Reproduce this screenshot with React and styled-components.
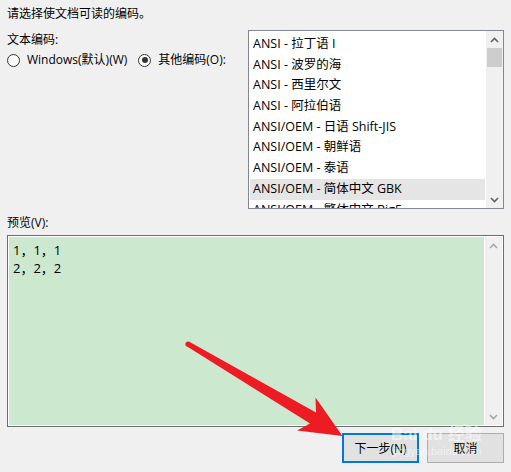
import React from "react";
import styled, { createGlobalStyle } from "styled-components";

const GlobalStyle = createGlobalStyle`
  html, body {
    margin: 0;
    padding: 0;
    background: #f0f0f0;
  }
  body {
    font-family: "Open Sans", "Noto Sans CJK SC", sans-serif;
    font-size: 12px;
    color: #000;
  }
`;

const encodings = [
  "ANSI - 拉丁语 I",
  "ANSI - 波罗的海",
  "ANSI - 西里尔文",
  "ANSI - 阿拉伯语",
  "ANSI/OEM - 日语 Shift-JIS",
  "ANSI/OEM - 朝鲜语",
  "ANSI/OEM - 泰语",
  "ANSI/OEM - 简体中文 GBK",
  "ANSI/OEM - 繁体中文 Big5",
];

const Chevron = ({ up, color }) => (
  <svg width="9" height="6" viewBox="0 0 9 6">
    <path
      d={up ? "M1 5 L4.5 1.5 L8 5" : "M1 1 L4.5 4.5 L8 1"}
      fill="none"
      stroke={color}
      strokeWidth="1.6"
    />
  </svg>
);

const App = () => {
  return (
    <Page>
      <GlobalStyle />
      <Heading>请选择使文档可读的编码。</Heading>

      <TopRow>
        <LeftCol>
          <Label>文本编码:</Label>
          <RadioRow>
            <Radio>
              <Circle />
              Windows(默认)(W)
            </Radio>
            <Radio>
              <Circle checked />
              其他编码(O):
            </Radio>
          </RadioRow>
        </LeftCol>

        <ListBox>
          <Items>
            {encodings.map((e, i) => (
              <Item key={e} selected={i === 7}>
                {e}
              </Item>
            ))}
          </Items>
          <ScrollBar>
            <Arrow>
              <Chevron up color="#606060" />
            </Arrow>
            <Thumb />
            <Track />
            <Arrow>
              <Chevron color="#606060" />
            </Arrow>
          </ScrollBar>
        </ListBox>
      </TopRow>

      <PreviewLabel>预览(V):</PreviewLabel>
      <Preview>
        <PreviewText>
          <div>1，1，1</div>
          <div>2，2，2</div>
        </PreviewText>
        <ScrollBar light>
          <Arrow>
            <Chevron up color="#a8a8a8" />
          </Arrow>
          <Track />
          <Arrow>
            <Chevron color="#a8a8a8" />
          </Arrow>
        </ScrollBar>
      </Preview>

      <Buttons>
        <Button primary>下一步(N)</Button>
        <Button>取消</Button>
      </Buttons>

      <Watermark>
        <span>Bai du 经验</span>
        <small>jingyan.baidu.com</small>
      </Watermark>

      <ArrowOverlay width="511" height="472" viewBox="0 0 511 472">
        <circle cx="188" cy="344" r="2.6" fill="#ed1c24" />
        <polygon
          fill="#ed1c24"
          points="189.3,341.8 316,412.5 315.5,397.5 342.5,436 297,430.5 310,423.5 186.7,346.2"
        />
      </ArrowOverlay>
    </Page>
  );
};

const Page = styled.div`
  position: relative;
  width: 511px;
  height: 472px;
  box-sizing: border-box;
  padding: 5px 7px 0 7px;
  overflow: hidden;
`;

const Heading = styled.div`
  line-height: 18px;
`;

const TopRow = styled.div`
  display: flex;
  justify-content: space-between;
  margin-top: 7px;
`;

const LeftCol = styled.div`
  display: flex;
  flex-direction: column;
  padding-top: 1px;
`;

const Label = styled.div`
  line-height: 18px;
`;

const RadioRow = styled.div`
  display: flex;
  gap: 11px;
  margin-top: 2px;
`;

const Radio = styled.label`
  display: flex;
  align-items: center;
  gap: 7px;
  line-height: 18px;
`;

const Circle = styled.span`
  width: 11px;
  height: 11px;
  border: 1px solid #333;
  border-radius: 50%;
  background: #fff;
  position: relative;
  flex: none;

  &::after {
    content: "";
    display: ${({ checked }) => (checked ? "block" : "none")};
    position: absolute;
    left: 2.5px;
    top: 2.5px;
    width: 6px;
    height: 6px;
    border-radius: 50%;
    background: #333;
  }
`;

const ListBox = styled.div`
  width: 256px;
  height: 179px;
  box-sizing: border-box;
  border: 1px solid #828790;
  background: #fff;
  display: flex;
  overflow: hidden;
  font-size: 12.5px;
`;

const Items = styled.div`
  flex: 1;
  padding: 3px 1px 0 1px;
  overflow: hidden;
`;

const Item = styled.div`
  height: 20.7px;
  line-height: 20.7px;
  padding-left: 3px;
  white-space: nowrap;
  background: ${({ selected }) => (selected ? "#e5e5e5" : "transparent")};
`;

const ScrollBar = styled.div`
  width: 17px;
  flex: none;
  background: #f0f0f0;
  display: flex;
  flex-direction: column;
  border-left: ${({ light }) => (light ? "1px solid #fff" : "none")};
`;

const Arrow = styled.div`
  height: 17px;
  display: flex;
  align-items: center;
  justify-content: center;
  flex: none;
`;

const Thumb = styled.div`
  height: 19px;
  margin: 0 1px;
  background: #cdcdcd;
  flex: none;
`;

const Track = styled.div`
  flex: 1;
`;

const PreviewLabel = styled.div`
  line-height: 18px;
  margin-top: 5px;
`;

const Preview = styled.div`
  margin-top: 3px;
  height: 192px;
  box-sizing: border-box;
  border: 1px solid #6d6d6d;
  padding: 1px;
  background: #fff;
  display: flex;
`;

const PreviewText = styled.div`
  flex: 1;
  background: #cce8cf;
  padding: 4px 4px;
  line-height: 18px;
  font-size: 13px;
`;

const Buttons = styled.div`
  display: flex;
  justify-content: flex-end;
  gap: 8px;
  margin-top: 6px;
`;

const Button = styled.button`
  width: 77px;
  height: 30px;
  box-sizing: border-box;
  font: inherit;
  color: #000;
  background: #e1e1e1;
  border: ${({ primary }) => (primary ? "2px solid #0078d7" : "1px solid #adadad")};
  padding: 0;
`;

const Watermark = styled.div`
  position: absolute;
  left: 391px;
  top: 426px;
  display: flex;
  flex-direction: column;
  color: rgba(255, 255, 255, 0.55);
  font-family: "Liberation Sans", "Noto Sans CJK SC", sans-serif;
  pointer-events: none;

  span {
    font-size: 17px;
    font-weight: bold;
    line-height: 18px;
  }
  small {
    font-size: 11px;
    line-height: 14px;
    margin-left: 2px;
  }
`;

const ArrowOverlay = styled.svg`
  position: absolute;
  left: 0;
  top: 0;
  pointer-events: none;
`;

export default App;
